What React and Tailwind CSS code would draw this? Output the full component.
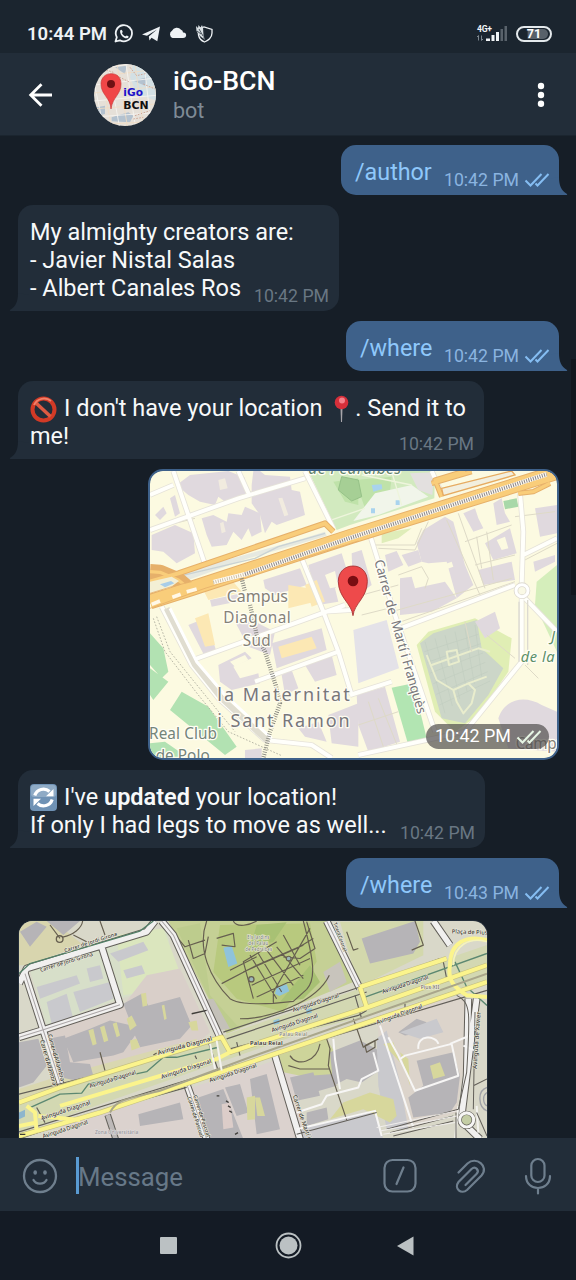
import React from "react";

const Tail = ({ out }) =>
  out ? (
    <svg className="absolute -right-[9px] bottom-0 h-[18px] w-[20px]" viewBox="0 0 20 18">
      <path d="M0 18V2L11 0C11 8 13 13.500 19 17C19.500 17.500 19 18 18 18Z" fill="#3e618a" />
    </svg>
  ) : (
    <svg className="absolute -left-[9px] bottom-0 h-[18px] w-[20px]" viewBox="0 0 20 18">
      <path d="M20 18V2L9 0C9 8 7 13.500 1 17C.5 17.500 1 18 2 18Z" fill="#222d39" />
    </svg>
  );

const Checks = ({ color }) => (
  <svg className="h-[16px] w-[26px] shrink-0" viewBox="0 0 26 16" fill="none" stroke={color} strokeWidth="2">
    <path d="M1.500 8.500L6.500 13.500L17.500 2M11.500 11.500L13.500 13.500L24.500 2" />
  </svg>
);

const Sent = ({ text, time, width }) => (
  <div className={`relative flex h-[50px] shrink-0 justify-between self-end rounded-[15px] rounded-br-none bg-[#3e618a] pl-[14px] pr-[9px] ${width}`}>
    <Tail out />
    <span className="mt-[13px] text-[23.300px] leading-[28px] text-[#8fc8fb]">{text}</span>
    <span className="mt-[25px] flex h-[20px] items-center gap-[5px] text-[17.700px] leading-[20px] text-[#8ab4e0]">
      {time}
      <Checks color="#85bdf2" />
    </span>
  </div>
);

const Received = ({ children, time, size }) => (
  <div className={`relative shrink-0 self-start rounded-[15px] rounded-bl-none bg-[#222d39] pl-[12px] pt-[14px] text-[23.500px] leading-[27.800px] text-[#f7f9fa] ${size}`}>
    <Tail />
    {children}
    <span className="absolute bottom-[5px] right-[10px] text-[17.700px] leading-[20px] text-[#697783]">{time}</span>
  </div>
);

const B = "#e0d9de";
const line = { fill: "none", strokeLinejoin: "round" };

const Pin = () => (
  <g>
    <path d="M624 452C620 415 580 398 580 349C580 321 599 303 624 303C649 303 667 321 667 349C667 398 628 415 624 452Z" fill="#ee4a4b" stroke="#a42c2e" strokeWidth="2.500" />
    <circle cx="624" cy="348" r="16" fill="#7a0d12" />
  </g>
);

const CityMap = () => (
  <svg className="h-full w-full" viewBox="15 18 1221 861" preserveAspectRatio="none">
    <rect x="0" y="0" width="1250" height="900" fill="#fcfae1" />
    {/* parks */}
    <path d="M490 18H870L868 100L615 180L575 195Z" fill="#d2eabf" />
    <path d="M565 50L640 40V120L600 110ZM630 45L740 35L735 80L660 130Z" fill="#bfe2a9" />
    <path d="M590 35L640 45L650 95L620 108L580 75Z" fill="#a6cf95" stroke="#96c288" strokeWidth="3" />
    <path d="M690 85L800 60L850 95L700 150L625 168Z" fill="#f1f5ea" />
    <path d="M795 25L868 22L862 90L820 75Z" fill="#e3e0df" />
    <path d="M680 60L710 58L712 72L685 80ZM678 130L690 130V145H678ZM752 106L764 106V120H752Z" fill="#a9d3ee" />
    <path d="M545 170L660 130M650 30L800 60M740 20L770 120" {...line} stroke="#eef5dc" strokeWidth="4" />
    <path d="M1236 300L1175 350L1170 420L1236 560Z" fill="#d5eebb" />
    <path d="M710 205L800 190L760 220L710 235Z" fill="#dfedb9" />
    <path d="M815 540L850 500L990 460L1100 520L1090 620L1000 750L930 800L870 740Z" fill="#e0eeb4" />
    <path d="M825 535L865 505L995 465L1010 550L1075 610L1030 690L960 775L890 760Z" fill="#ccd6c8" />
    {[0, 1, 2, 3, 4, 5].map((i) => (
      <path key={i} d={`M${840 + i * 30} ${530 - i * 10}L${900 + i * 22} ${745 - i * 22}M${838 + i * 9} ${560 + i * 32}L${1000 + i * 7} ${508 + i * 28}`} {...line} stroke="#c1cdbf" strokeWidth="2" />
    ))}
    <path d="M845 570L875 645L925 675L935 710L955 745L980 715L990 675L970 655L925 675M860 600L1000 550L1035 560M905 560L935 555L942 590L912 600ZM970 655L1025 635" {...line} stroke="#e9edcd" strokeWidth="6" />
    <path d="M15 505L55 550L70 620L50 640L15 600ZM15 610L70 650L25 705L15 690Z" fill="#b2e2b2" />
    <path d="M110 680L190 725L275 845L240 870L75 735ZM15 835L60 830L125 875H15Z" fill="#b2e2b2" />
    <path d="M740 668L805 655L845 820L790 840Z" fill="#b2e5b2" />
    <path d="M1075 108L1115 100L1120 125L1080 133Z" fill="#a8d8a9" />
    {/* buildings */}
    <g fill={B}>
      <path d="M95 60L135 30L250 18L300 38L302 92L240 110L220 95L210 120L165 110L130 90Z" />
      <path d="M325 18H345L360 30L435 35L440 75L465 80L480 150L395 180L380 170L360 205L345 150L320 115L320 60Z" />
      <path d="M170 160L205 150L245 170L250 145L290 150L300 125L345 145L350 200L320 215L310 190L290 225L265 200L245 240L200 245L185 210Z" />
      <path d="M20 210L90 180L145 205L150 265L95 295L55 260L20 255ZM30 150L55 125L65 145L45 165ZM75 100L90 90L105 145L90 155Z" />
      <path d="M355 345L465 310L485 360L390 390L360 370ZM490 300L590 265L610 330L570 370L580 410L520 420ZM195 405L290 385L300 405L200 425Z" />
      <path d="M620 265L650 255L680 360L625 400Z" />
      <path d="M835 195L900 155L925 170L960 300L985 360L935 400L905 290L850 295L830 290L815 235Z" />
      <path d="M720 270L755 258L775 300L730 320ZM770 270L820 255L830 290L790 305ZM765 340L800 335L810 370L900 350L935 400L860 440L765 450Z" />
      <path d="M955 145L990 130L1000 160L1015 190L985 200ZM1045 115L1070 100L1080 145L1095 170L1055 180ZM1170 130L1236 120V205L1185 215ZM1020 235L1095 190L1115 265L1045 285ZM1000 315L1100 290L1110 345L1015 360ZM1165 290L1230 270V290L1170 320Z" />
      <path d="M130 480L180 460L215 560L180 575ZM270 470L310 460L390 500L375 570L310 545ZM380 535L530 490L545 555L395 610Z" />
      <path d="M220 600L300 560L320 580L265 605L285 640L340 625L345 655L260 675L225 650ZM410 630L440 615L460 670L420 690ZM480 600L560 570L575 630L510 650ZM550 750L640 715V845L560 835ZM460 790L520 770L545 830L480 815ZM300 855L350 850V880H300Z" />
      <path d="M635 690L720 665L765 830L670 860L640 780ZM990 470L1050 440L1065 490L1020 520ZM1060 760C1080 700 1140 690 1190 720L1236 740V860L1090 850Z" />
    </g>
    <path d="M625 495L725 465L762 610L640 655Z" fill="#e4e2e8" />
    <path d="M220 45L240 40L248 70L225 75ZM225 175L235 170L242 200L230 205ZM400 100L412 98L430 150L418 154Z" fill="#f1ebdf" />
    <path d="M170 365L260 345L290 380L190 405ZM150 460L190 445L210 540L180 545ZM400 545L500 515L515 550L410 580ZM480 360L515 345L540 410L500 425ZM430 360L490 370L510 410L430 430Z" fill="#fce8b4" />
    <path d="M1055 225L1080 215L1090 250L1070 255ZM540 330L570 318L580 365L555 370ZM865 310L920 290L925 305L870 325ZM255 590L300 570L310 585L270 605Z" fill="#fcfae1" />
    {/* minor paths */}
    <g {...line} stroke="#dedac7" strokeWidth="3">
      <path d="M690 240L810 240L830 190M700 250L810 255L850 170M905 165L1005 390M940 145L1020 370M960 230L1100 180M990 300L1110 270M760 330L830 305L850 340L840 370M615 400L760 360M1110 155L1230 140M1130 290L1236 235M30 190L150 160M740 480L1110 350M740 440L1100 340M960 470L980 560M1025 510L1110 580M1140 600L1180 640" />
      <path d="M995 215L1010 310M1025 200L1045 345M650 450L750 425M640 780L760 740M700 700L760 850M670 710L720 860" />
    </g>
    {/* streets */}
    <g {...line} stroke="#e6e3d9" strokeWidth="17">
      <path d="M85 18L180 298M15 195L280 100L480 40M15 90L85 60M280 18L315 95M480 18L565 190M470 280L535 440M620 435L535 440L580 560L620 690M130 590L600 420M330 650L580 560M50 425L140 600L220 700L360 825L500 840L560 879M740 500L1110 360M1125 85L1135 200L1130 360M1135 270L1236 220M1140 400L1236 500M1130 400V590L960 800L640 870M860 18L890 85M675 210L750 450L870 800M615 690L740 650" />
    </g>
    <g {...line} stroke="#fffffb" strokeWidth="12">
      <path d="M85 18L180 298M15 195L280 100L480 40M15 90L85 60M280 18L315 95M480 18L565 190M470 280L535 440M620 435L535 440L580 560L620 690M130 590L600 420M330 650L580 560M50 425L140 600L220 700L360 825L500 840L560 879M740 500L1110 360M1125 85L1135 200L1130 360M1135 270L1236 220M1140 400L1236 500M1130 400V590L960 800L640 870M860 18L890 85M675 210L750 450L870 800M615 690L740 650" />
    </g>
    <path d="M65 430L150 600L230 700L370 830" {...line} stroke="#e0ddd0" strokeWidth="18" />
    <path d="M75 430L155 590L240 690L380 820" {...line} stroke="#fff" strokeWidth="9" />
    <path d="M25 460L60 560L160 690L250 800L410 872M35 455L75 560L180 690L270 800" {...line} stroke="#aaa99b" strokeWidth="2.500" strokeDasharray="5 5" />
    <circle cx="1131" cy="377" r="18" fill="#faf9e6" stroke="#dedad0" strokeWidth="14" />
    <circle cx="1131" cy="377" r="18" fill="none" stroke="#fff" strokeWidth="9" />
    <path d="M1122 410V590M1148 405V600" {...line} stroke="#dcdad1" strokeWidth="4" />
    {/* arterial */}
    <path d="M100 325L460 225L540 200L545 212L470 235L310 280L130 345Z" fill="#e6e9e1" />
    <path d="M110 332L330 280L400 245L540 205" {...line} stroke="#c9d2d3" strokeWidth="4" />
    <g {...line} stroke="#e6b06a">
      <path d="M15 350L100 325L540 175L565 200" strokeWidth="18" />
      <path d="M15 320L45 322L100 345L130 370M15 410L140 370L615 215L1236 22" strokeWidth="46" />
      <path d="M860 55L980 20M890 95L870 45L960 18M1120 85L1165 80L1215 55" strokeWidth="16" />
    </g>
    <g {...line} stroke="#f9cd7a">
      <path d="M15 350L100 325L540 175L565 200" strokeWidth="12" />
      <path d="M15 410L140 370L615 215L1236 22" strokeWidth="40" />
      <path d="M15 320L45 322L100 345L130 370M860 55L980 20M890 95L870 45L960 18M1120 85L1165 80L1215 55" strokeWidth="10" />
    </g>
    <path d="M15 350L80 335L102 348L75 368L15 385Z" fill="#f3efd5" />
    <path d="M45 358L78 348L88 355L60 367Z" fill="#a8cde9" />
    <path d="M15 385L90 362L140 350M15 430L180 370L640 228" {...line} stroke="#e6b06a" strokeWidth="2.500" />
    <path d="M20 418L45 408M82 397L107 388M125 380L155 372" {...line} stroke="#fff8e8" strokeWidth="11" />
    <path d="M890 70L1100 18L1110 30L895 92Z" fill="#f2efdf" stroke="#e6ab61" strokeWidth="4" />
    <path d="M205 352L300 328L615 219L1205 28" {...line} stroke="#fffaf0" strokeWidth="14" />
    <path d="M205 352L300 328" {...line} stroke="#c3b9a4" strokeWidth="10" strokeDasharray="2.500 4.500" />
    <path d="M300 328L615 219L1205 28" {...line} stroke="#8b888b" strokeWidth="12" strokeDasharray="3 4" />
    <path d="M290 340L300 380M315 420L335 510L360 560L392 660L405 715L375 800L355 879" {...line} stroke="#85857e" strokeWidth="13" strokeDasharray="2.500 4.500" />
    {/* labels */}
    <g fontFamily="Noto Sans, sans-serif" fill="#858179" stroke="#fffef4" strokeWidth="8" paintOrder="stroke" strokeLinejoin="round">
      <text x="490" y="26" fontSize="47" fontStyle="italic" fill="#62836b" textLength="278">de Pedralbes</text>
      <text x="245" y="410" fontSize="48" textLength="184">Campus</text>
      <text x="235" y="475" fontSize="46" textLength="202">Diagonal</text>
      <text x="293" y="542" fontSize="46" textLength="84">Sud</text>
      <text x="217" y="707" fontSize="54" fill="#77767a" stroke="#fdfbf0" textLength="397">la Maternitat</text>
      <text x="217" y="785" fontSize="54" fill="#77767a" stroke="#fdfbf0" textLength="397">i Sant Ramon</text>
      <text x="12" y="823" fontSize="46" fill="#74847a" textLength="204">Real Club</text>
      <text x="32" y="888" fontSize="46" fill="#74847a" textLength="162">de Polo</text>
      <text x="1218" y="528" fontSize="44" fontStyle="italic" fill="#5c9069">J</text>
      <text x="1127" y="590" fontSize="44" fontStyle="italic" fill="#5c9069" textLength="102">de la</text>
      <text x="1112" y="852" fontSize="46" textLength="172">Campus</text>
      <text transform="translate(688 288) rotate(75)" fontSize="40" fill="#79787c" textLength="170">Carrer de</text>
      <text transform="translate(738 470) rotate(74)" fontSize="40" fill="#79787c" textLength="290">Martí i Franquès</text>
    </g>
    <Pin />
  </svg>
);

const dark = "#625f59";

const StreetMap = () => (
  <svg className="h-full w-full" viewBox="27 18 1404 651" preserveAspectRatio="none">
    <rect x="0" y="0" width="1450" height="680" fill="#d9d8c9" />
    <path d="M27 18H130L220 90L50 150H27Z" fill="#d8d5ae" />
    <path d="M60 165L410 60L470 40L500 200L330 250L110 330Z" fill="#d7dfc9" />
    <path d="M320 60L460 40L520 200L440 225L340 240Z" fill="#dbe6be" />
    <path d="M410 180L510 160L600 350L560 385L290 460L150 495L110 350L340 270Z" fill="#d9cfc9" />
    <path d="M27 560L640 360L1431 90V205L900 345L27 650Z" fill="#d3d8b2" />
    <path d="M27 520L150 480L560 370L560 390L27 550Z" fill="#d9d7b0" />
    <path d="M160 625L530 520L720 460L850 415L880 669H120Z" fill="#dbd2ce" />
    <path d="M1100 300L1360 240L1375 370L1340 590L1200 640L1120 510Z" fill="#dcd4cb" />
    {/* parks */}
    <path d="M475 18H960L1030 200L650 355Z" fill="#c5d095" />
    <path d="M500 40L570 25L600 240L690 340L640 340Z" fill="#bdcc8d" />
    <path d="M630 30L900 25L920 140L820 290L680 250L610 170Z" fill="#b8c97e" />
    <path d="M740 30L830 22L790 80L720 100ZM810 260L900 150L930 200L880 250Z" fill="#a8c174" />
    <path d="M940 170L990 140L1010 200L960 230Z" fill="#c8c4bc" />
    <path d="M570 255L610 250L660 340L625 345Z" fill="#c4c1b9" />
    <path d="M990 20L1240 18L1240 120L1045 215Z" fill="#d3d8ac" />
    <path d="M805 420L950 370L985 430L970 500L820 470Z" fill="#cdd49a" />
    {/* buildings */}
    <g fill="#b6b4b7">
      <path d="M30 50L80 20L110 35L60 95ZM110 18H210L160 60ZM1055 70L1215 18L1230 80L1210 115L1080 145Z" />
      <path d="M340 265L395 235L415 270L510 245L545 330L510 370L390 395L375 360L340 410L310 420L190 440L160 370L240 340L300 315L365 330Z" />
      <path d="M115 370L165 360L180 440L240 445L250 480L200 495L155 485ZM27 380L85 370L110 450L70 500L27 515Z" />
      <path d="M385 595L510 560L520 610L390 630ZM550 550L640 520L700 669H600ZM645 515L690 505L715 590L680 600ZM720 490L770 475L810 640L740 655Z" />
      <path d="M960 410L1050 375L1100 400L1115 460L1055 500L1010 490L970 510ZM840 485L910 470L930 540L860 555ZM900 480L970 475L980 510L910 530ZM890 590L950 575L955 610L890 630Z" />
      <path d="M1220 435L1330 410L1350 480L1340 560L1320 590L1210 605L1195 545L1240 510ZM1165 350L1220 310L1250 320L1220 355L1185 360Z" />
    </g>
    <g fill="#c9c9cd">
      <path d="M80 215L200 180L210 205L90 250ZM110 260L170 235L190 310L125 325ZM190 230L300 200L310 250L210 290ZM300 115L400 80L415 105L325 140ZM230 160L270 150L280 190L240 200ZM340 165L395 150L405 175L350 190Z" />
      <path d="M1100 370L1130 345L1170 500L1195 640L1130 640L1105 510ZM880 635L1090 585L1120 669H860ZM1170 350L1280 310L1300 350L1230 370Z" />
    </g>
    <g fill="#d7d79c">
      <path d="M235 345L250 340L260 385L248 390ZM270 335L283 330L295 375L282 380ZM308 325L320 320L330 360L320 365ZM350 310L365 300L380 330L360 345ZM360 375L380 370L390 395L365 405ZM393 235L408 232L412 270L398 274ZM455 270L463 268L470 310L463 314ZM710 545L735 540V610L712 612ZM535 320L560 315L565 345L545 345Z" />
      <path d="M1000 560L1080 530L1150 550L1160 600L1140 620L1060 580L960 610ZM1170 410L1195 430L1200 510ZM735 545L750 545L765 600L742 600ZM1120 385L1150 380L1170 440Z" />
      <path d="M1260 450L1290 440L1305 480L1270 490Z" />
    </g>
    <path d="M635 565L660 560L670 635L640 640Z" fill="#dccdc9" />
    <path d="M640 98L665 92L682 145L655 155ZM800 215L830 207L838 228L808 242L795 235ZM790 315L808 310V325L792 328ZM888 282L905 278V292L890 296Z" fill="#8fc3db" />
    <path d="M27 590L45 582V602L27 610Z" fill="#8db5cd" />
    {/* park paths */}
    <g {...line} stroke="#665f50" strokeWidth="3.500">
      <path d="M475 35L525 95L585 75M535 75L550 130L585 115L595 65M590 18C560 100 600 190 660 250C680 262 710 268 790 264L850 258L890 222C920 190 910 130 880 18M635 205L740 150L880 90M660 165L740 125M620 70L670 55L675 95L635 90M670 18C680 40 720 30 740 18M800 80L700 140L730 250M720 120L800 250M745 115L815 230M770 105L850 210M800 95L880 190M700 170L860 100L910 70M725 210L900 130M740 245L880 180M790 262L790 230L900 40M690 310C780 310 920 260 958 180" />
      <path d="M820 60L870 150M890 20L915 100L870 130L820 125" />
      <path d="M1010 50L1030 105L1045 100M1215 18L1240 90L1205 105M120 30L150 70M158 66C190 60 215 40 218 18M190 60L230 80M270 18L285 60" />
      <path d="M840 420C860 455 920 440 930 385M835 450L870 460L960 460M950 370L960 400L955 450L1010 612M1030 310L1060 395L1105 370M1065 390L1070 410L1095 395V375ZM270 410L285 465M430 418L440 412" />
    </g>
    <circle cx="149" cy="72" r="10" {...line} stroke="#665f50" strokeWidth="4" />
    <circle cx="724" cy="192" r="8" fill="#9bb6b8" stroke="#665f50" strokeWidth="4" />
    <circle cx="836" cy="130" r="7" fill="#9bb6b8" stroke="#665f50" strokeWidth="3" />
    {/* streets */}
    <g {...line} stroke={dark} strokeWidth="23">
      <path d="M27 205L50 160L410 50L435 18M45 175L100 345L155 515M27 365L100 343L330 268L275 95M455 18L490 60L630 365M950 18L1050 220M530 505L590 669M795 420L870 669M1375 250L1370 480L1355 600M1400 250L1370 480M1270 18L1320 90M1370 630L1410 669" />
    </g>
    <g {...line} stroke="#f1f0ef" strokeWidth="17">
      <path d="M27 205L50 160L410 50L435 18M45 175L100 345L155 515M27 365L100 343L330 268L275 95M455 18L490 60L630 365M950 18L1050 220M530 505L590 669M795 420L870 669M1375 250L1370 480L1355 600M1400 250L1370 480M1270 18L1320 90M1370 630L1410 669" />
    </g>
    <path d="M293 597L317 669" {...line} stroke={dark} strokeWidth="20" />
    <path d="M293 597L317 669" {...line} stroke="#bdb9b8" strokeWidth="14" />
    <path d="M45 175L100 345L155 515M455 18L490 60L630 365M950 18L1050 220M530 505L590 669M27 365L100 343L330 268" {...line} stroke="#aaa5a6" strokeWidth="3" />
    <path d="M27 175L60 145L390 48L430 18" {...line} stroke="#527f66" strokeWidth="4" />
    <g {...line} stroke="#f7f6f5" strokeWidth="6">
      <path d="M860 590L935 565L950 540L1045 515L1055 490L1105 465L1090 410M860 640L1095 585L1115 660M1110 330L1210 635M1135 365L1165 420L1215 525L1345 480L1325 385L1185 420L1170 430M1320 385L1380 360M1225 400C1220 355 1280 360 1285 385M1395 405L1360 390M970 370L975 430L990 520" />
    </g>
    {/* avenue */}
    <g {...line} stroke={dark} strokeWidth="3.500">
      <path d="M27 535L220 487M27 648L640 460L1431 225M640 350L1050 215M650 370L1070 230M1050 220L1290 130M660 400L1045 300L1070 285M30 668L260 590L530 515" />
      <path d="M595 380L625 465M555 420L560 430M680 380L690 420M1035 240L1055 310M1300 140L1310 190M1185 265V280M80 575L105 620" />
    </g>
    <path d="M60 575L150 535L215 532L235 505L410 468L460 425L500 425L625 395M1065 245L1431 115M1335 140L1370 215L1431 270" {...line} stroke="#5c8871" strokeWidth="4" />
    <g {...line} stroke="#c4bf7e" strokeWidth="16">
      <path d="M27 560L150 515L635 365L660 410L720 390M720 390L1060 280L1431 150M27 660L270 590L720 440L1431 200M1050 215L1310 130M1050 215L1070 275" />
    </g>
    <g {...line} stroke="#fbf48c" strokeWidth="12">
      <path d="M27 560L150 515L635 365L660 410L720 390L1060 280L1431 150M150 570L620 430L660 410M27 660L270 590L720 440L1431 200M1050 215L1310 130M1050 215L1070 275M50 570L75 590L80 650M27 630L80 620M85 600L210 612" />
      <path d="M1431 75C1370 60 1320 80 1320 150C1310 200 1340 220 1370 240L1431 245" />
    </g>
    <path d="M300 590C320 550 350 550 450 525L720 425L1431 175" {...line} stroke="#a9a68b" strokeWidth="6" />
    <path d="M1431 80C1380 65 1330 90 1330 150" {...line} stroke="#f5f3bb" strokeWidth="5" />
    <path d="M620 375L635 465M600 385L615 460M1345 570L1335 669M1400 570L1405 650" {...line} stroke="#f3f2ee" strokeWidth="6" />
    <path d="M1340 240C1385 260 1380 300 1370 470L1345 580L1130 640M1395 290L1390 580M1431 490L1390 510M860 655L1100 590M1140 650L1330 600M1150 660L1330 615M1338 590V669M1400 590L1431 660" {...line} stroke={dark} strokeWidth="3" />
    <circle cx="1370" cy="612" r="21" fill="#c4cda5" stroke={dark} strokeWidth="13" />
    <circle cx="1370" cy="612" r="21" fill="none" stroke="#f6f5f4" strokeWidth="9" />
    <path d="M1431 515C1400 525 1405 575 1431 585M1431 530C1415 540 1420 565 1431 570" {...line} stroke="#9fa1a6" strokeWidth="4" />
    <path d="M1100 635L1340 585M1110 645L1340 600M1120 655L1335 620" {...line} stroke="#f0eeec" strokeWidth="3" />
    {/* labels */}
    <g fontFamily="Noto Sans, sans-serif" fontSize="17.500" fontWeight="500" fill="#35332f" stroke="#eceadd" strokeWidth="3" paintOrder="stroke">
      <text transform="translate(165 112) rotate(-18)" fontSize="16" textLength="165">Carrer de Jordi Girona</text>
      <text transform="translate(92 170) rotate(-17)" fontSize="16" textLength="165">Carrer de Jordi Girona</text>
      <text transform="translate(113 358) rotate(74)" textLength="145">Carrer d'Alfambra</text>
      <text transform="translate(90 375) rotate(74)" textLength="140">Carrer d'Alfambra</text>
      <text transform="translate(445 418) rotate(-15)" fontSize="19" textLength="168">Avinguda Diagonal</text>
      <text transform="translate(455 490) rotate(-18)" fontSize="18" textLength="158">Avinguda Diagonal</text>
      <text transform="translate(240 517) rotate(-17)" textLength="145">Avinguda Diagonal</text>
      <text transform="translate(95 613) rotate(-18)" fontSize="18" textLength="155">Avinguda Diagonal</text>
      <text transform="translate(100 667) rotate(-18)" textLength="142">Avinguda Diagonal</text>
      <text transform="translate(600 500) rotate(-18)" textLength="148">Avinguda Diagonal</text>
      <text transform="translate(850 290) rotate(-18)" textLength="145">Avinguda Diagonal</text>
      <text transform="translate(787 350) rotate(-18)" textLength="145">Avinguda Diagonal</text>
      <text transform="translate(1118 235) rotate(-18)" textLength="145">Avinguda Diagonal</text>
      <text transform="translate(1102 327) rotate(-20)" textLength="145">Avinguda Diagonal</text>
      <text transform="translate(970 25) rotate(70)" fontSize="15" textLength="90">Tinent Coronel</text>
      <text transform="translate(550 540) rotate(72)" fontSize="16" textLength="130">Carrer de Pascual</text>
      <text transform="translate(532 545) rotate(72)" fontSize="16" textLength="125">Carrer de Pascual</text>
      <text transform="translate(848 540) rotate(71)" fontSize="18" textLength="150">Carrer de Martí i F</text>
      <text transform="translate(1400 460) rotate(-86)" fontSize="18" textLength="170">Avinguda de Xavier</text>
      <text x="1325" y="55" transform="rotate(2 1325 55)" textLength="108">Plaça de Pius</text>
      <text x="720" y="389" textLength="98" fontWeight="600">Palau Reial</text>
      <text x="808" y="360" fontSize="15" textLength="84" fill="#888573">Palau Reial</text>
      <text x="1232" y="222" fontSize="16" textLength="56" fill="#77746b">Pius XII</text>
      <text x="255" y="655" fontSize="14.500" textLength="130" fill="#99969b" stroke="#dedbdc">Zona Universitària</text>
      <text x="712" y="72" textLength="66" fontSize="13" fill="#788172">Els Jardins</text>
      <text x="715" y="90" textLength="60" fontSize="13" fill="#788172">del Palau</text>
      <text x="706" y="108" textLength="80" fontSize="13" fill="#788172">de Pedralbes</text>
    </g>
    <path d="M545 295L590 285M620 540H628M648 555L656 560M654 570L662 575M658 585L666 590M675 655L684 650M30 655H46" {...line} stroke="#3f3d39" strokeWidth="4" />
  </svg>
);

const Avatar = () => (
  <svg className="h-[62px] w-[62px] rounded-full" viewBox="282 190 186 186">
    <rect x="280" y="188" width="190" height="190" fill="#e6e0d8" />
    <path d="M400 190H470V300L410 280L390 230Z" fill="#d3e0e4" />
    <path d="M335 350L385 335L400 345L390 365L335 362ZM345 200L380 195L375 220ZM290 320L315 315V340L295 345ZM400 240L440 230L435 255Z" fill="#b4c2cf" />
    {[0, 1, 2, 3, 4, 5, 6, 7].map((i) => (
      <path key={i} d={`M${270 + i * 27} 190L${310 + i * 24} 376M282 ${205 + i * 24}L468 ${180 + i * 26}`} stroke={i % 2 ? "#f0dcc3" : "#f6f4f0"} strokeWidth="2.500" />
    ))}
    <path d="M390 200L410 225L440 218M300 345L330 370M350 225L390 245M405 345L450 330M430 250L465 265M310 205L340 215M400 355L430 350" stroke="#cfa898" strokeWidth="3" strokeDasharray="5 4" fill="none" />
    <path d="M333 325C331 290 303 282 303 250C303 231 316 219 334 219C352 219 363 231 363 250C363 282 337 290 333 325Z" fill="#f04647" stroke="#c8393b" strokeWidth="2" />
    <circle cx="333" cy="250" r="12" fill="#6e1013" />
    <g fontFamily="DejaVu Sans, sans-serif" fontWeight="700" fontSize="33">
      <text x="370" y="285" fill="#1d11c9" textLength="59" lengthAdjust="spacingAndGlyphs">iGo</text>
      <text x="370" y="325" fill="#111" textLength="76" lengthAdjust="spacingAndGlyphs">BCN</text>
    </g>
  </svg>
);

const StatusIcons = () => (
  <svg className="ml-[7px] h-[22px] w-[100px]" viewBox="114 23 100 22" fill="none">
    <path d="M115.500 41.500L116.800 37.200A8.100 8.100 0 1 1 119.900 40.300Z" stroke="#eef2f5" strokeWidth="1.800" strokeLinejoin="round" />
    <path d="M120.300 30.200C120.800 29.400 121.700 29.500 122 30.200L122.700 31.800C122.800 32.300 121.900 33 122 33.300C122.800 34.800 123.700 35.700 125.200 36.300C125.700 36.400 126.300 35.300 126.800 35.400L128.400 36.200C129 36.600 128.300 38 127.200 38.300C123.500 39 119 33.500 120.300 30.200Z" fill="#eef2f5" />
    <path d="M142 34.500L160 26.500L157.300 41.300L151.500 37.700L149.500 40.500L148.800 36.500L157 29.500L147 35.800Z" fill="#eef2f5" />
    <path d="M172.500 38A4 4 0 0 1 172 30.800A5.200 5.200 0 0 1 181 29.800Q183 30.500 183 32.500C187 32 187.500 38 183 38Z" fill="#eef2f5" />
    <path d="M198 29L204 27L212 29.500V33C212 37.500 208 41 204.500 42C201 40.500 199 37.500 198.500 35Z" stroke="#eef2f5" strokeWidth="1.300" />
    <path d="M196 26L198 28L198.500 25L200.500 27.500L202 25L203 28L204 37L205 40L200 36L196.500 31Z" fill="#d9e0e4" />
    <path d="M199 29L203 36M197 31L201 34M204 30V40" stroke="#26313b" strokeWidth=".8" />
  </svg>
);

export default function App() {
  return (
    <div className="flex h-[1280px] w-[576px] flex-col overflow-hidden bg-[#161e27] font-['Roboto',sans-serif]">
      <div className="flex h-[53px] shrink-0 items-center bg-[#1b252f] pl-[27px] pr-[24px] pt-[15px]">
        <span className="w-[80px] whitespace-nowrap text-[18.500px] font-semibold leading-[22px] text-[#eef2f5]">10:44 PM</span>
        <StatusIcons />
        <svg className="ml-auto h-[20px] w-[32px]" viewBox="476 24 32 20">
          <text x="477" y="31.500" fontSize="8.600" fontWeight="700" fontFamily="Roboto, sans-serif" fill="#f1f4f6" textLength="15">4G+</text>
          <path d="M478.500 35.500V40.500M477 37L478.500 35.500M481.500 40.500V35.500M483 39L481.500 40.500" stroke="#7b858d" fill="none" />
          <path d="M486 38.500H490V41H486ZM491.500 35H494.500V41H491.500ZM496 32H499V41H496Z" fill="#f1f4f6" />
          <path d="M500.500 29H503V41H500.500ZM504.500 26H507V41H504.500Z" fill="#59626b" />
        </svg>
        <span className="ml-[8px] flex h-[16px] w-[36px] items-center rounded-full border-2 border-[#e4e9ec] px-[2px] py-px">
          <span className="flex h-full w-full items-center justify-center rounded-full bg-gradient-to-r from-[#1b252f] from-25% to-[#58616a] to-30% text-[12.500px] font-bold leading-none text-white">71</span>
        </span>
      </div>

      <div className="flex h-[83px] shrink-0 items-center border-b border-[#1b252f] bg-[#222d39]">
        <svg className="ml-[28px] mt-px h-[26px] w-[26px] shrink-0" viewBox="0 0 26 26" fill="none" stroke="#fff" strokeWidth="2.800">
          <path d="M24 13H3M13.500 2.200L2.700 13L13.500 23.800" />
        </svg>
        <div className="ml-[40px] mt-px h-[62px] w-[62px] shrink-0">
          <Avatar />
        </div>
        <div className="ml-[17px] flex flex-col">
          <span className="text-[26.700px] font-medium leading-[32px] text-white">iGo-BCN</span>
          <span className="text-[21.500px] leading-[27px] text-[#7f8b96]">bot</span>
        </div>
        <svg className="ml-auto mr-[31px] mt-px h-[26px] w-[8px]" viewBox="0 0 8 26" fill="#fff">
          <circle cx="4" cy="4" r="3.200" />
          <circle cx="4" cy="13" r="3.200" />
          <circle cx="4" cy="21.800" r="3.200" />
        </svg>
      </div>

      <div className="relative flex min-h-0 flex-1 flex-col gap-[10px] overflow-hidden pl-[18px] pr-[17px] pt-[9px]">
        <div className="absolute right-0 top-[223px] h-[236px] w-[5px] bg-[#11161d]" />
        <Sent text="/author" time="10:42 PM" width="w-[218px]" />
        <Received time="10:42 PM" size="h-[106px] w-[321px]">
          <p>My almighty creators are:</p>
          <p>- Javier Nistal Salas</p>
          <p>- Albert Canales Ros</p>
        </Received>
        <Sent text="/where" time="10:42 PM" width="w-[213px]" />
        <Received time="10:42 PM" size="h-[78px] w-[466px]">
          <p className="flex items-center whitespace-pre">
            <svg className="mr-[7px] h-[27px] w-[27px]" viewBox="0 0 27 27" fill="none">
              <circle cx="13.500" cy="13.500" r="11" stroke="#d23a26" strokeWidth="4" />
              <path d="M6 7L20.500 20.500" stroke="#de5a42" strokeWidth="3.500" />
              <path d="M4 9A11 11 0 0 1 21 5" stroke="#f1816a" strokeWidth="1.800" />
            </svg>
            <span>I don't have your location </span>
            <svg className="h-[28px] w-[27px]" viewBox="0 0 27 28">
              <path d="M12.500 13H14.500L14 27H13Z" fill="#a7a5aa" />
              <circle cx="13.500" cy="7.500" r="6.800" fill="#d62f3a" />
              <circle cx="14" cy="5.500" r="3" fill="#f4808a" />
            </svg>
            <span>. Send it to</span>
          </p>
          <p>me!</p>
        </Received>

        <div className="relative h-[291px] w-[411px] shrink-0 self-end overflow-hidden rounded-[15px] border-2 border-[#3e618a] bg-[#3e618a]">
          <div className="h-full w-full overflow-hidden rounded-[12px]">
            <CityMap />
          </div>
          <div className="absolute bottom-[9px] right-[8px] flex h-[25px] w-[123px] items-center justify-between rounded-full bg-[#514e4e]/70 pl-[9px] pr-[7px] text-[17.900px] text-white">
            <span className="whitespace-nowrap">10:42 PM</span>
            <Checks color="#e6f5e4" />
          </div>
        </div>

        <Received time="10:42 PM" size="h-[78px] w-[467px]">
          <p className="flex items-center whitespace-pre">
            <svg className="mr-[7px] h-[27px] w-[27px]" viewBox="0 0 27 27" fill="none">
              <rect width="27" height="27" rx="4" fill="#6f92b5" />
              <rect x="1" y="1" width="25" height="12" rx="3" fill="#8fabc6" />
              <path d="M4.800 11.500A9 9 0 0 1 19.500 7.500M22.200 15.500A9 9 0 0 1 7.500 19.500" stroke="#fff" strokeWidth="3.200" />
              <path d="M23.500 5V12.300H16ZM3.500 22V14.700H11Z" fill="#fff" />
            </svg>
            <span>I've <b className="font-semibold">updated</b> your location!</span>
          </p>
          <p>If only I had legs to move as well...</p>
        </Received>
        <Sent text="/where" time="10:43 PM" width="w-[213px]" />
        <div className="mt-[2px] h-[219px] w-[470px] shrink-0 self-start overflow-hidden rounded-t-[15px] border-x border-t border-[#222d39]">
          <StreetMap />
        </div>
      </div>

      <div className="flex h-[73px] shrink-0 items-center bg-[#222d39] pt-[2px]">
        <svg className="ml-[22px] h-[36px] w-[36px]" viewBox="0 0 36 36" fill="none" stroke="#6f7f8e" strokeWidth="2.300">
          <circle cx="18" cy="18" r="16" />
          <path d="M11.500 22C14 26.800 22 26.800 24.500 22" strokeLinecap="round" />
          <ellipse cx="13.200" cy="14.500" rx="1.800" ry="2.200" fill="#6f7f8e" stroke="none" />
          <ellipse cx="23" cy="14.500" rx="1.800" ry="2.200" fill="#6f7f8e" stroke="none" />
        </svg>
        <div className="ml-[18px] h-[37px] w-[3px] bg-[#5a9bd3]" />
        <span className="ml-[-1px] mt-[2px] text-[25.800px] leading-[30px] text-[#677888]">Message</span>
        <svg className="ml-auto h-[36px] w-[36px]" viewBox="0 0 36 36" fill="none" stroke="#6f7f8e" strokeWidth="2.200" strokeLinecap="round">
          <rect x="2.500" y="2" width="31" height="31.500" rx="8" />
          <path d="M21.500 9.500L14.500 26" />
        </svg>
        <svg className="ml-[34px] h-[36px] w-[36px]" viewBox="452 1157.500 36 36" fill="none" stroke="#6f7f8e" strokeWidth="2.200" strokeLinecap="round">
          <path d="M458.500 1172L467.500 1163C476 1155 489.500 1166 481.500 1175L467 1189.500C461.500 1194.500 453.500 1188 458.500 1181.500L471.500 1168.500C475.500 1165 480 1170 476.500 1173.500L465.500 1184.500" />
        </svg>
        <svg className="ml-[32px] mr-[20px] h-[38px] w-[36px]" viewBox="0 0 36 38" fill="none" stroke="#6f7f8e" strokeWidth="2.200" strokeLinecap="round">
          <rect x="11.300" y="2" width="13.200" height="23" rx="6.600" />
          <path d="M6 19C6 35 30 35 30 19M18 31V36.500" />
        </svg>
      </div>

      <div className="flex h-[69px] shrink-0 items-center bg-[#141b25]">
        <div className="ml-[160px] h-[17px] w-[17px] rounded-[1px] bg-[#bbc1c3]" />
        <svg className="ml-[98px] h-[27px] w-[27px]" viewBox="0 0 27 27" fill="none">
          <circle cx="13.500" cy="13.500" r="12" stroke="#bbc1c3" strokeWidth="1.800" />
          <circle cx="13.500" cy="13.500" r="9" fill="#bbc1c3" />
        </svg>
        <svg className="ml-[94px] h-[20px] w-[18px]" viewBox="0 0 18 20">
          <path d="M1 10L17.500 .5V19.500Z" fill="#bbc1c3" />
        </svg>
      </div>
    </div>
  );
}
